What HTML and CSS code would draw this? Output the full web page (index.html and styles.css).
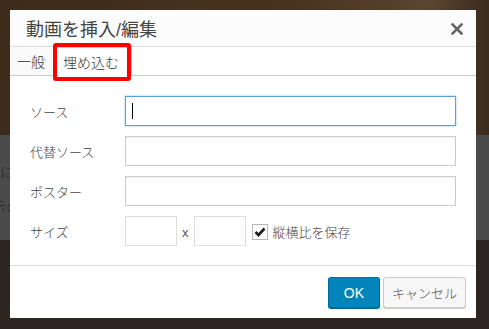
FILE: index.html
```html
<!DOCTYPE html>
<html lang="ja">
<head>
    <meta charset="UTF-8">
    <title>動画を挿入/編集</title>
    <link rel="stylesheet" href="styles.css">
</head>
<body>
    <div class="backdrop">
        <div class="bg-top"></div>
        <div class="bg-band">
            <p class="line-a">記事の中に</p>
            <p class="line-b">画像の拡大表示の</p>
        </div>
        <div class="bg-bottom"></div>
    </div>

    <div class="dialog">
        <div class="dialog-head">
            <h1>動画を挿入/編集</h1>
            <span class="close">
                <svg width="12" height="12" viewBox="0 0 12 12">
                    <path d="M1.5 1.5 L10.5 10.5 M10.5 1.5 L1.5 10.5" stroke="#666" stroke-width="2.6" stroke-linecap="square"/>
                </svg>
            </span>
        </div>

        <div class="tabs">
            <span class="tab">一般</span>
            <span class="tab active">埋め込む</span>
            <span class="tab-rest"></span>
        </div>

        <div class="form">
            <div class="row">
                <label>ソース</label>
                <div class="field focus"><span class="caret"></span></div>
            </div>
            <div class="row">
                <label>代替ソース</label>
                <div class="field"></div>
            </div>
            <div class="row">
                <label>ポスター</label>
                <div class="field"></div>
            </div>
            <div class="row">
                <label>サイズ</label>
                <div class="size">
                    <div class="field small"></div>
                    <span class="times">x</span>
                    <div class="field small"></div>
                    <span class="check">
                        <svg width="12" height="10" viewBox="0 0 12 10">
                            <path d="M1.5 5 L4.5 8 L10.5 1.5" fill="none" stroke="#1e1e1e" stroke-width="2.6"/>
                        </svg>
                    </span>
                    <span class="check-label">縦横比を保存</span>
                </div>
            </div>
        </div>

        <div class="dialog-foot">
            <button class="btn primary">OK</button>
            <button class="btn">キャンセル</button>
        </div>

        <div class="marker"></div>
    </div>
</body>
</html>
```

FILE: styles.css
```css
html, body {
    margin: 0;
    padding: 0;
}

body {
    width: 489px;
    height: 329px;
    overflow: hidden;
    position: relative;
    font-family: 'Liberation Sans', 'Noto Sans CJK JP', sans-serif;
    font-weight: 300;
    color: #444;
}

.backdrop {
    display: flex;
    flex-direction: column;
    height: 329px;
}

.bg-top {
    height: 135px;
    background: linear-gradient(90deg, #3d2c1b 0%, #47331f 60%, #5a4530 88%, #3a2b1d 100%);
}

.bg-band {
    height: 105px;
    background-color: #4b4b4b;
    padding-top: 26px;
    box-sizing: border-box;
}

.bg-band p {
    margin: 0;
    font-size: 14px;
    color: #262626;
    white-space: nowrap;
}

.line-a {
    margin-left: -56px !important;
}

.line-b {
    margin-top: 15px !important;
    margin-left: -92px !important;
}

.bg-bottom {
    flex: 1;
    background-color: #2c2520;
}

.dialog {
    position: absolute;
    left: 10px;
    top: 10px;
    width: 466px;
    height: 308px;
    background-color: #fff;
    display: flex;
    flex-direction: column;
}

.dialog-head {
    height: 36px;
    background-color: #fcfcfc;
    border-bottom: 1px solid #ddd;
    display: flex;
    align-items: center;
    justify-content: space-between;
    padding: 0 13px 0 16px;
}

.dialog-head h1 {
    margin: 0;
    font-size: 18px;
    font-weight: normal;
    color: #444;
}

.close {
    display: flex;
    margin-top: 1px;
}

.tabs {
    height: 29px;
    display: flex;
    background-color: #fafafa;
}

.tab {
    display: flex;
    align-items: center;
    font-size: 14px;
    color: #333;
    padding: 0 8px 0 7px;
    border-bottom: 1px solid #ccc;
}

.tab.active {
    background-color: #fff;
    padding: 0 12px 0 9px;
    border: 1px solid #ccc;
    border-bottom-color: #fff;
}

.tab-rest {
    flex: 1;
    border-bottom: 1px solid #ccc;
    background-color: #fff;
}

.form {
    padding: 20px 20px 19px 20px;
    display: flex;
    flex-direction: column;
    gap: 10px;
    border-bottom: 1px solid #ddd;
}

.row {
    display: flex;
    align-items: center;
    height: 30px;
}

.row label {
    width: 95px;
    font-size: 13px;
    color: #444;
}

.field {
    flex: 1;
    height: 30px;
    box-sizing: border-box;
    border: 1px solid #ccc;
    box-shadow: inset 0 1px 2px rgba(0, 0, 0, 0.07);
    background-color: #fff;
    display: flex;
    align-items: center;
}

.field.focus {
    border-color: #5b9dd9;
    box-shadow: 0 0 2px rgba(30, 140, 190, 0.5);
}

.caret {
    width: 1px;
    height: 16px;
    background-color: #000;
    margin-left: 6px;
}

.size {
    display: flex;
    align-items: center;
}

.field.small {
    flex: none;
    width: 52px;
    box-shadow: none;
    border-color: #ddd;
}

.times {
    font-size: 13px;
    color: #555;
    margin: 2px 5px 0 5px;
}

.check {
    width: 16px;
    height: 16px;
    box-sizing: border-box;
    border: 1px solid #b4b9be;
    background-color: #fff;
    display: flex;
    align-items: center;
    justify-content: center;
    margin-left: 6px;
    margin-top: 1px;
}

.check-label {
    font-size: 13px;
    color: #444;
    margin-left: 5px;
}

.dialog-foot {
    flex: 1;
    display: flex;
    justify-content: flex-end;
    align-items: flex-start;
    gap: 3px;
    padding: 11px 10px 0 0;
}

.btn {
    height: 31px;
    font-family: 'Liberation Sans', 'Noto Sans CJK JP', sans-serif;
    font-weight: 300;
    font-size: 13px;
    border-radius: 3px;
    border: 1px solid #ccc;
    background-color: #f7f7f7;
    color: #555;
    box-shadow: 0 1px 0 #ccc;
    padding: 0 8px;
}

.btn.primary {
    width: 52px;
    font-size: 14px;
    background-color: #0085ba;
    border-color: #0073aa #006799 #006799;
    box-shadow: 0 1px 0 #006799;
    color: #fff;
}

.marker {
    position: absolute;
    left: 43px;
    top: 33px;
    width: 78px;
    height: 38px;
    box-sizing: border-box;
    border: 4px solid #f00;
    border-radius: 3px;
}
```
